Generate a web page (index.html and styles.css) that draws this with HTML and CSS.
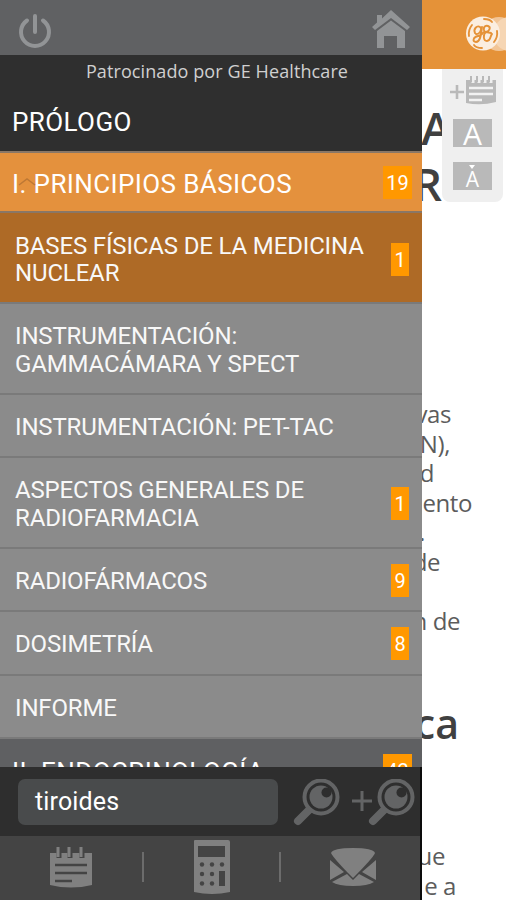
FILE: index.html
```html
<!DOCTYPE html>
<html lang="es">
<head>
    <meta charset="UTF-8">
    <meta name="viewport" content="width=device-width, initial-scale=1.0">
    <title>Medicina Nuclear</title>
    <link rel="stylesheet" href="styles.css">
</head>
<body>
    <div class="app">
        <!-- Side menu -->
        <nav class="menu">
            <div class="menu-top">
                <svg class="power" width="36" height="38" viewBox="0 0 36 38" fill="none" stroke="#929496" stroke-width="4" stroke-linecap="round">
                    <path d="M10 9.500A14 14 0 1 0 26 9.500M18 5v16"/>
                </svg>
                <svg class="home" width="40" height="40" viewBox="0 0 40 40" fill="#929496">
                    <path d="M1 18L6 13.500V6h5v3.500L20 1L39 18L36 21L20 9L4 21Z"/>
                    <path d="M6 22L20 11.500L34 22V39H26V27H13V39H6Z"/>
                </svg>
            </div>
            <div class="intro">
                <div class="sponsor">Patrocinado por GE Healthcare</div>
                <div class="prologo">PRÓLOGO</div>
            </div>
            <div class="section open">
                <span class="section-title">I. PRINCIPIOS BÁSICOS</span>
                <svg class="arrow" width="18" height="9" viewBox="0 0 18 9" fill="none" stroke="#bd7834" stroke-width="1.500"><path d="M1 8L9 2L17 8"/></svg>
                <span class="badge wide">19</span>
            </div>
            <ul class="list">
                <li class="item active"><span>BASES FÍSICAS DE LA MEDICINA<br>NUCLEAR</span><span class="badge">1</span></li>
                <li class="item two"><span>INSTRUMENTACIÓN:<br>GAMMACÁMARA Y SPECT</span></li>
                <li class="item"><span>INSTRUMENTACIÓN: PET-TAC</span></li>
                <li class="item two"><span>ASPECTOS GENERALES DE<br>RADIOFARMACIA</span><span class="badge">1</span></li>
                <li class="item"><span>RADIOFÁRMACOS</span><span class="badge">9</span></li>
                <li class="item"><span>DOSIMETRÍA</span><span class="badge">8</span></li>
                <li class="item"><span>INFORME</span></li>
            </ul>
            <div class="next">
                <div class="section">
                    <span class="section-title">II. ENDOCRINOLOGÍA</span>
                    <span class="badge wide">42</span>
                </div>
            </div>
            <div class="search">
                <div class="field">tiroides</div>
                <svg width="48" height="48" viewBox="0 0 48 48">
                    <path d="M16 31L5 42" stroke="#636465" stroke-width="8" stroke-linecap="round"/>
                    <circle cx="28" cy="18" r="16.500" fill="#2e2e2e" stroke="#636465" stroke-width="4"/>
                    <circle cx="28" cy="18" r="11.500" fill="#636465"/>
                    <circle cx="33.500" cy="13.500" r="5" fill="#2e2e2e"/>
                </svg>
                <svg width="65" height="48" viewBox="0 0 65 48">
                    <path d="M2 22H22M12 12V32" stroke="#636465" stroke-width="3"/>
                    <path d="M34 31L23 42" stroke="#636465" stroke-width="8" stroke-linecap="round"/>
                    <circle cx="46" cy="18" r="16.500" fill="#2e2e2e" stroke="#636465" stroke-width="4"/>
                    <circle cx="46" cy="18" r="11.500" fill="#636465"/>
                    <circle cx="51.500" cy="13.500" r="5" fill="#2e2e2e"/>
                </svg>
            </div>
            <div class="tools">
                <svg width="44" height="44" viewBox="0 0 44 44">
                    <path d="M1 8H43V40Q22 45 1 40Z" fill="#808080"/>
                    <path d="M10 8v5M21 8v5M33 8v5" stroke="#444" stroke-width="5"/>
                    <path d="M9 2v10M20 2v10M32 2v10" stroke="#808080" stroke-width="3"/>
                    <path d="M6 20H38M6 28H38M6 36H23" stroke="#444" stroke-width="2.500"/>
                </svg>
                <span class="sep"></span>
                <svg width="36" height="56" viewBox="0 0 36 56">
                    <path d="M0 2Q0 1 1 1H34Q36 1 36 3V53Q18 57 0 53Z" fill="#808080"/>
                    <path d="M4 7H31V18H4ZM25 32H31V47H25Z" fill="#444"/>
                    <g fill="#444"><circle cx="8" cy="25.500" r="2.200"/><circle cx="18" cy="25.500" r="2.200"/><circle cx="28" cy="25.500" r="2.200"/><circle cx="8" cy="35" r="2.200"/><circle cx="18" cy="35" r="2.200"/><circle cx="8" cy="44.500" r="2.200"/><circle cx="18" cy="44.500" r="2.200"/></g>
                </svg>
                <span class="sep"></span>
                <svg width="46" height="40" viewBox="0 0 46 40" fill="#808080">
                    <path d="M1 6Q3 1 23 1T45 6Q43 11 23 31Q4 12 1 6Z"/>
                    <path d="M0 13L14 25L0 33ZM46 13L32 25L46 33Z"/>
                    <path d="M2 35L17 27L23 33L29 27L44 35Q38 39 23 39T2 35Z"/>
                </svg>
            </div>
        </nav>

        <!-- Chapter behind the menu -->
        <main class="page">
            <header class="brand">
                <svg width="41" height="40" viewBox="0 0 41 40">
                    <circle cx="34" cy="20" r="17" fill="#f2c596"/>
                    <circle cx="45" cy="20" r="17" fill="#f6d6b4"/>
                    <circle cx="18" cy="19.500" r="17" fill="#fbeee0"/>
                    <g fill="none" stroke="#e59238" stroke-width="1.900" stroke-linecap="round">
                        <path d="M19 5Q25 5 27 8M32 17Q33 23 29 28M17 34Q11 34 9 31M4 22Q3 16 7 11"/>
                        <path d="M10 19C8 15 12 11 15 13S14 21 11 20M17 13C16 22 15 28 11 28S8 23 13 22S17 19 19 18"/>
                        <path d="M20 18C17 14 20 11 23 12S25 17 21 18C18 20 18 27 22 27S25 22 27 20M21 18L26 19"/>
                    </g>
                </svg>
            </header>
            <div class="article">
                <h1 class="title"><span class="line">LA</span><span class="line r">R</span></h1>
                <p class="text">
                    <span class="line w1">vas</span>
                    <span class="line w2">N),</span>
                    <span class="line w3">d</span>
                    <span class="line w4">ento</span>
                    <span class="line w5">.</span>
                    <span class="line w6">de</span>
                    <span class="line w6"></span>
                    <span class="line w7">n de</span>
                </p>
                <h2 class="subtitle"><span class="line">ca</span></h2>
                <p class="text last">
                    <span class="line w8">ue</span>
                    <span class="line w9">e a</span>
                </p>
            </div>
            <aside class="page-tools">
                <svg width="46" height="32" viewBox="0 0 46 32">
                    <path d="M0 18H14M7 11V25" stroke="#b9b9b9" stroke-width="2.600"/>
                    <path d="M16 6H46V28Q31 32 16 29Z" fill="#b9b9b9"/>
                    <path d="M23 5V9M29 5V9M35 5V9M41 5V9" stroke="#efefef" stroke-width="3"/>
                    <path d="M21 2V8M27 2V8M33 2V8M39 2V8" stroke="#b9b9b9" stroke-width="2"/>
                    <path d="M19 14H43M19 20H43M19 26H32" stroke="#f2f2f2" stroke-width="2.300"/>
                </svg>
                <span class="size big">A</span>
                <span class="size small"><i></i>A</span>
            </aside>
        </main>
    </div>
</body>
</html>
```
FILE: styles.css
```css
* { box-sizing: border-box; }
body { margin: 0; font-family: Roboto, sans-serif; background-color: #ffffff; }
svg { display: block; flex: none; }

.app {
    display: flex;
    width: 506px;
    height: 900px;
    overflow: hidden;
}

/* Side menu */
.menu {
    width: 422px;
    height: 900px;
    flex: none;
    display: flex;
    flex-direction: column;
    background-color: #8b8b8b;
    color: #ffffff;
}

.menu-top {
    height: 55px;
    flex: none;
    display: flex;
    justify-content: space-between;
    padding: 11px 11px 0 17px;
    background-color: #606163;
}

.home { margin-top: -2px; }

.intro {
    height: 96px;
    flex: none;
    background-color: #2f2f2f;
}

.sponsor {
    padding: 4px 0 0 12px;
    font-family: "Open Sans", sans-serif;
    font-size: 18px;
    line-height: 24px;
    letter-spacing: 0.1px;
    text-align: center;
    color: #d0d0d0;
}

.prologo {
    padding: 24px 0 0 12px;
    font-size: 26px;
    line-height: 30px;
    letter-spacing: 0.4px;
}

.section {
    position: relative;
    height: 62px;
    flex: none;
    display: flex;
    align-items: center;
    justify-content: space-between;
    padding: 0 10px 0 12px;
    font-size: 26px;
    letter-spacing: 0.4px;
    background-color: #5f6062;
}

.section-title { padding-top: 4px; }

.section.open {
    background-color: #e4913d;
    border-top: 2px solid #8a7766;
    border-bottom: 2px solid #8a7766;
}

/* arrow sits over the section number */
.arrow {
    position: absolute;
    left: 18px;
    top: 24px;
}

.list {
    margin: 0;
    padding: 0;
    list-style: none;
}

.item {
    display: flex;
    align-items: center;
    justify-content: space-between;
    height: 63.500px;
    padding: 4px 13px 0 15px;
    font-size: 24px;
    line-height: 27.500px;
    letter-spacing: -0.15px;
    border-bottom: 2px solid #7a7a7a;
    color: #f8f8f8;
}

.item.two { height: 90.500px; padding-top: 5px; }
.item.active { height: 91px; padding-top: 5px; background-color: #ae6a26; }

.badge {
    width: 18px;
    height: 33px;
    flex: none;
    margin-top: -2px;
    background-color: #ff9800;
    color: #ffffff;
    font-size: 20px;
    line-height: 34px;
    letter-spacing: 0;
    text-align: center;
}

.badge.wide { width: 29px; margin-top: 0; }

.next {
    height: 28px;
    flex: none;
    overflow: hidden;
}

.search {
    height: 69px;
    flex: none;
    display: flex;
    padding: 12px 0 0 18px;
    background-color: #2e2e2e;
    box-shadow: inset -2px 0 0 #0c0c0c;
}

.field {
    width: 260px;
    height: 46px;
    margin-right: 15px;
    padding-left: 17px;
    border-radius: 7px;
    background-color: #494b4c;
    font-size: 25px;
    line-height: 46px;
    letter-spacing: 0.15px;
}

.search svg + svg { margin-left: 9px; }

.tools {
    height: 65px;
    flex: none;
    display: flex;
    align-items: center;
    justify-content: space-between;
    padding: 0 46px 4px 49px;
    background-color: #444444;
    box-shadow: inset -2px 0 0 #0c0c0c;
}

.sep {
    width: 2px;
    height: 30px;
    background-color: #6c6c6c;
}

/* Chapter */
.page {
    position: relative;
    width: 84px;
    height: 900px;
    overflow: hidden;
    font-family: "Open Sans", sans-serif;
    color: #5c5c5c;
}

.brand {
    height: 69px;
    padding: 14px 0 0 43px;
    background-color: #e59238;
}

.line {
    display: flex;
    justify-content: flex-end;
    overflow: hidden;
    white-space: pre;
}

.title {
    margin: 0;
    padding-top: 31px;
    width: 29px;
    font-size: 45px;
    line-height: 56px;
    font-weight: 600;
    color: #404040;
}

.title .r { width: 20px; }

.text {
    margin: 0;
    padding-top: 187px;
    font-size: 24px;
    line-height: 29.500px;
    letter-spacing: -0.4px;
}

.text .line { height: 29.500px; }
.w1 { width: 29px; }
.w2 { width: 28px; }
.w3 { width: 12px; }
.w4 { width: 50px; }
.w5 { width: 3px; }
.w6 { width: 18px; }
.w7 { width: 38px; }
.w8 { width: 23px; }
.w9 { width: 34px; }

.subtitle {
    margin: 0;
    padding-top: 58px;
    width: 37px;
    font-size: 41px;
    line-height: 60px;
    font-weight: 600;
    color: #404040;
}

.text.last { padding-top: 88px; }

/* Floating page buttons */
.page-tools {
    position: absolute;
    left: 20px;
    top: 69px;
    width: 61px;
    height: 133px;
    display: flex;
    flex-direction: column;
    align-items: center;
    padding-top: 5px;
    border-radius: 0 0 8px 8px;
    background-color: #efefef;
}

.size {
    position: relative;
    width: 39px;
    height: 28px;
    background-color: #b9b9b9;
    color: #ffffff;
    font-family: "Open Sans", sans-serif;
    text-align: center;
}

.big { margin-top: 13px; font-size: 30px; line-height: 29px; }
.small { margin-top: 15px; font-size: 21px; line-height: 35px; }

.small i {
    position: absolute;
    left: 16px;
    top: 3px;
    border: 3px solid transparent;
    border-top: 4px solid #ffffff;
}
```
